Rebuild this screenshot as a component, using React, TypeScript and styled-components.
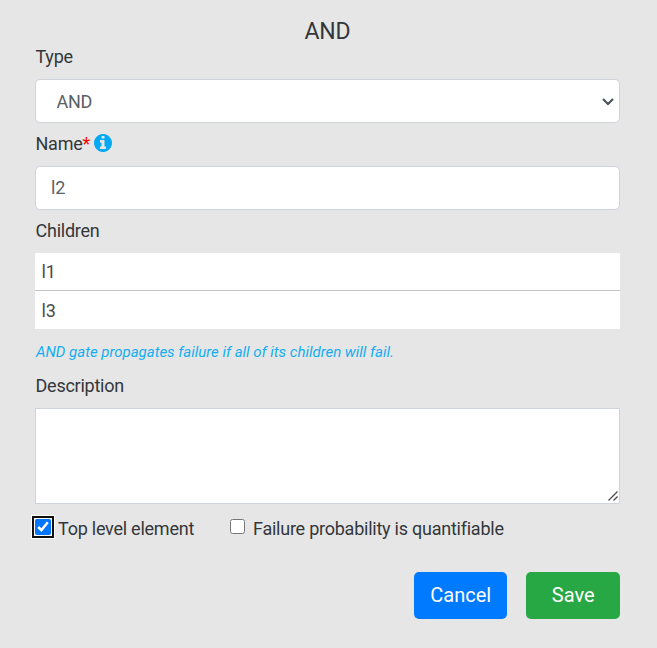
import React from "react";
import styled, { createGlobalStyle, css } from "styled-components";

const Global = createGlobalStyle`
  *, *::before, *::after { box-sizing: border-box; }
  body { margin: 0; background: #e6e6e6; }
`;

const Form = styled.form`
  display: flex;
  flex-direction: column;
  width: 657px;
  height: 648px;
  padding: 18px 37px 0 35px;
  background: #e6e6e6;
  color: #33373b;
  font: 400 18px/27px Roboto, sans-serif;
  letter-spacing: -0.24px;
  overflow: hidden;
`;

const Title = styled.h5`
  height: 26px;
  margin: 0;
  font-size: 23px;
  font-weight: 400;
  line-height: 28px;
  text-align: center;
`;

const Field = styled.div`
  display: flex;
  flex-direction: column;
  margin-bottom: 8px;
`;

const Label = styled.label`
  display: flex;
  height: 35px;
  padding-left: 0.5px;
  line-height: 25px;
`;

const Required = styled.span`
  color: #ff0000;
`;

const InfoIcon = styled.svg`
  width: 18px;
  height: 18px;
  margin: 3px 0 0 4px;
  fill: #03a9f4;
`;

const control = css`
  width: 100%;
  height: 44px;
  margin: 0;
  border: 1px solid #ced4da;
  border-radius: 5px;
  background: #fff;
  color: #596067;
  font: inherit;
  letter-spacing: inherit;
  outline: none;
`;

const Overlay = styled.div`
  position: relative;
`;

const Select = styled.select`
  ${control}
  appearance: none;
  padding: 0 0 0 20.5px;
`;

const Chevron = styled.svg`
  position: absolute;
  top: 17px;
  right: 5px;
  width: 14px;
  height: 11px;
  fill: none;
  stroke: #495057;
  stroke-width: 2.1;
  pointer-events: none;
`;

const Grip = styled.svg`
  position: absolute;
  right: 1px;
  bottom: 2px;
  width: 12px;
  height: 12px;
  stroke: #505050;
  stroke-width: 1.4;
  pointer-events: none;
`;

const Input = styled.input`
  ${control}
  padding: 0 15px 1px;
`;

const List = styled.ul`
  height: 76px;
  margin: 0;
  padding: 0;
  list-style: none;
  background: #fff;
`;

const ListItem = styled.li`
  height: 38px;
  padding-left: 6.5px;
  color: #4c4c4c;
  line-height: 38px;
  & + & { line-height: 40px; }
  &:not(:last-child) { border-bottom: 1px solid #c4c4c4; }
`;

const Hint = styled.p`
  height: 27px;
  margin: 2px 0 7px;
  padding-left: 1px;
  color: #14aef0;
  font-size: 15px;
  font-style: italic;
  font-weight: 400;
  letter-spacing: -0.01px;
`;

const TextArea = styled.textarea`
  display: block;
  width: 100%;
  height: 96px;
  border: 1px solid #ced4da;
  background: #fff;
  font: inherit;
  outline: none;
  resize: none;
`;

const Checks = styled.div`
  display: flex;
  height: 27px;
  margin-top: 3px;
`;

const Check = styled.label<{ $width?: number }>`
  display: flex;
  gap: 8px;
  width: ${(p) => (p.$width ? `${p.$width}px` : "auto")};
`;

const Box = styled.input<{ $ring?: boolean }>`
  width: 15px;
  height: 15px;
  margin: 4px 0 0;
  outline: none;
  ${(p) =>
    p.$ring &&
    css`
      width: 16px;
      height: 16px;
      margin-right: -1px;
      border-radius: 2px;
      box-shadow: 0 0 0 1px #fff, 0 0 0 3px #101010, 0 0 0 4px #fff;
    `}
`;

const Actions = styled.div`
  display: flex;
  justify-content: flex-end;
  gap: 19px;
  margin-top: 30px;
`;

const Button = styled.button<{ $color: string; $width: number }>`
  width: ${(p) => p.$width}px;
  height: 47px;
  padding: 0 0 0 0.5px;
  border: 0;
  border-radius: 5px;
  background: ${(p) => p.$color};
  color: #fff;
  font: 400 20px/47px Roboto, sans-serif;
`;

const children = ["l1", "l3"];

export default function App() {
  return (
    <>
      <Global />
      <Form onSubmit={(e) => e.preventDefault()}>
        <Title>AND</Title>
        <Field>
          <Label htmlFor="type">Type</Label>
          <Overlay>
            <Select id="type" defaultValue="AND">
              <option>AND</option>
            </Select>
            <Chevron viewBox="0 0 14 11" aria-hidden="true">
              <path d="M2 3l5 5 5-5" />
            </Chevron>
          </Overlay>
        </Field>
        <Field>
          <Label htmlFor="name">
            Name<Required>*</Required>
            <InfoIcon viewBox="128 128 1536 1536" aria-hidden="true">
              <path d="M1152 1376v-160q0-14-9-23t-23-9h-96V672q0-14-9-23t-23-9H672q-14 0-23 9t-9 23v160q0 14 9 23t23 9h96v320h-96q-14 0-23 9t-9 23v160q0 14 9 23t23 9h448q14 0 23-9t9-23zm-128-896V320q0-14-9-23t-23-9H800q-14 0-23 9t-9 23v160q0 14 9 23t23 9h192q14 0 23-9t9-23zm640 416q0 209-103 385.500T1281.500 1561 896 1664t-385.500-103T231 1281.500 128 896t103-385.500T510.500 231 896 128t385.500 103T1561 510.500 1664 896z" />
            </InfoIcon>
          </Label>
          <Input id="name" defaultValue="l2" />
        </Field>
        <Field>
          <Label as="div">Children</Label>
          <List>
            {children.map((name) => (
              <ListItem key={name}>{name}</ListItem>
            ))}
          </List>
        </Field>
        <Hint>AND gate propagates failure if all of its children will fail.</Hint>
        <Field>
          <Label htmlFor="description">Description</Label>
          <Overlay>
            <TextArea id="description" />
            <Grip viewBox="0 0 12 12" aria-hidden="true">
              <path d="M1.500 10.500l9-9M6.500 10.500l4-4" />
            </Grip>
          </Overlay>
        </Field>
        <Checks>
          <Check $width={195}>
            <Box type="checkbox" defaultChecked $ring />
            Top level element
          </Check>
          <Check>
            <Box type="checkbox" />
            Failure probability is quantifiable
          </Check>
        </Checks>
        <Actions>
          <Button type="button" $color="#007bff" $width={93}>Cancel</Button>
          <Button type="submit" $color="#28a745" $width={94}>Save</Button>
        </Actions>
      </Form>
    </>
  );
}
